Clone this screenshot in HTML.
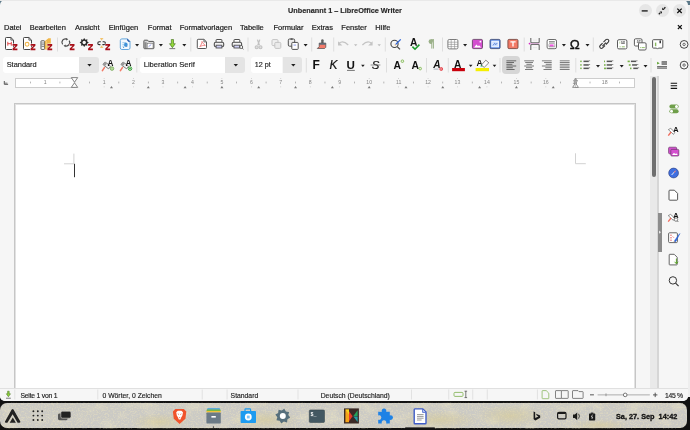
<!DOCTYPE html>
<html><head><meta charset="utf-8">
<style>
*{margin:0;padding:0;box-sizing:border-box}
html,body{width:690px;height:430px;overflow:hidden;background:#111;font-family:"Liberation Sans",sans-serif;color:#2e2e2e}
.a{position:absolute}
.t{position:absolute;white-space:nowrap;line-height:1;color:#1c1c1c;-webkit-text-stroke:0.15px #1c1c1c}
#corner-tl{left:0;top:0;width:12px;height:12px;background:#5b7888}
#corner-tr{left:678px;top:0;width:12px;height:12px;background:#5b7888}
#win{will-change:transform;left:0;top:0;width:688px;height:401px;background:#f6f6f6;border-radius:5px 5px 5px 5px;overflow:hidden}
#edge{left:688px;top:5px;width:2px;height:392px;background:#eeeeee}
.menu{font-size:7.5px;top:24px;color:#1c1c1c;-webkit-text-stroke:0.2px #1c1c1c}
.wbtn{width:13px;height:13px;border-radius:50%;background:#e6e6e6;top:4px}
.combo{background:#fff;border-radius:3px 0 0 3px}
.cbtn{background:#e4e4e4;border-radius:0 3px 3px 0}
.sep{width:1px;background:#e2e2e2}
.st{font-size:6.8px;top:393px;color:#1c1c1c;-webkit-text-stroke:0.15px #1c1c1c}
</style></head><body>
<div class="a" id="corner-tl"></div>
<div class="a" id="corner-tr"></div>
<div class="a" style="left:0;top:0;width:690px;height:1px;background:#e9e9e9;z-index:5"></div>
<div class="a" id="win">
  <!-- title -->
  <div class="t" style="left:288px;top:6.5px;font-size:7.3px;font-weight:bold;color:#2b2b2b">Unbenannt 1 – LibreOffice Writer</div>
  <div class="a wbtn" style="left:638.5px"></div>
  <div class="a wbtn" style="left:655.5px"></div>
  <div class="a wbtn" style="left:672.5px"></div>
  <!-- menu -->
  <div class="t menu" style="left:4px">Datei</div>
  <div class="t menu" style="left:29.7px">Bearbeiten</div>
  <div class="t menu" style="left:75px">Ansicht</div>
  <div class="t menu" style="left:108.7px">Einfügen</div>
  <div class="t menu" style="left:147.8px">Format</div>
  <div class="t menu" style="left:179.7px">Formatvorlagen</div>
  <div class="t menu" style="left:240px">Tabelle</div>
  <div class="t menu" style="left:273.5px">Formular</div>
  <div class="t menu" style="left:311.7px">Extras</div>
  <div class="t menu" style="left:341.3px">Fenster</div>
  <div class="t menu" style="left:375.3px">Hilfe</div>

  <!-- toolbar 2 combos -->
  <div class="a combo" style="left:2.5px;top:57px;width:76px;height:16px"></div>
  <div class="a cbtn" style="left:78.5px;top:57px;width:20px;height:16px"></div>
  <div class="t" style="left:6.7px;top:61px;font-size:7.4px">Standard</div>
  <div class="a combo" style="left:139.7px;top:57px;width:85.6px;height:16px"></div>
  <div class="a cbtn" style="left:225.3px;top:57px;width:19.7px;height:16px"></div>
  <div class="t" style="left:143.7px;top:61px;font-size:7.6px">Liberation Serif</div>
  <div class="a combo" style="left:250.8px;top:57px;width:31.7px;height:16px"></div>
  <div class="a cbtn" style="left:282.5px;top:57px;width:19.5px;height:16px"></div>
  <div class="t" style="left:254.7px;top:61px;font-size:7.2px">12 pt</div>
  <!-- align left pressed -->
  <div class="a" style="left:502px;top:56px;width:18px;height:18px;background:#d6d6d6;border-radius:4px"></div>

  <!-- ruler -->
  <div class="a" style="left:14.5px;top:78px;width:60px;height:10px;background:#fff;border:1px solid #cdcdcd"></div>
  <div class="a" style="left:575px;top:78px;width:60px;height:10px;background:#fff;border:1px solid #cdcdcd"></div>

  <!-- page -->
  <div class="a" style="left:14px;top:103px;width:622px;height:300px;background:#fff;border:1px solid #c6c6c6;box-shadow:inset 1px 1px 0 #e2e2e2, inset -1px 0 0 #e2e2e2"></div>

  <!-- scrollbar -->
  <div class="a" style="left:650px;top:76px;width:7px;height:312px;background:#e9e9e9"></div>
  <div class="a" style="left:652px;top:77px;width:3.8px;height:100px;background:#6e6e6e;border-radius:2px"></div>
  <div class="a" style="left:657px;top:76px;width:2px;height:312px;background:#d6d6d6"></div>
  <div class="a" style="left:658px;top:212.5px;width:3.7px;height:39.5px;background:#8c8c8c"></div>

  <!-- status bar -->
  <div class="a" style="left:0;top:388px;width:690px;height:13px;background:#f6f6f6;border-top:1px solid #e0e0e0"></div>
  <div class="t st" style="left:20.5px;letter-spacing:-0.22px">Seite 1 von 1</div>
  <div class="t st" style="left:102.5px">0 Wörter, 0 Zeichen</div>
  <div class="t st" style="left:230.6px">Standard</div>
  <div class="t st" style="left:320.7px">Deutsch (Deutschland)</div>
  <div class="t st" style="left:665px;letter-spacing:-0.3px">145 %</div>
</div>
<div class="a" id="edge"></div>

<!-- taskbar -->
<div class="a" style="left:0;top:402.8px;width:687px;height:25.6px;background:#cbcac5;border-radius:7px"></div>
<div class="t" style="z-index:10;will-change:transform;left:615.6px;top:413px;font-size:7.3px;font-weight:bold;color:#111;-webkit-text-stroke:0.3px #111">Sa, 27. Sep&nbsp; 14:42</div>

<svg class="a" style="left:0;top:0;will-change:transform" width="690" height="430" viewBox="0 0 690 430">
<rect x="641.7" y="10.2" width="6" height="1.4" fill="#222"/>
<path d="M658.8 14.2l1.6-1.6" stroke="#222" stroke-width="1.3"/><path d="M659.6 11.4h2.4v2.4z" fill="#222"/><path d="M665.4 7.2l-1.6 1.6" stroke="#222" stroke-width="1.3"/><path d="M664.6 10h-2.4v-2.4z" fill="#222"/>
<path d="M677.3 8.6l4.4 4.4M681.7 8.6l-4.4 4.4" stroke="#111" stroke-width="1.3"/>
<path d="M677.9 25.1l3.9 3.9M681.8 25.1l-3.9 3.9" stroke="#111" stroke-width="1.2"/>
<rect x="57.0" y="37.5" width="1" height="14.0" fill="#dedede"/>
<rect x="190.3" y="37.5" width="1" height="14.0" fill="#dedede"/>
<rect x="247.5" y="37.5" width="1" height="14.0" fill="#dedede"/>
<rect x="311.2" y="37.5" width="1" height="14.0" fill="#dedede"/>
<rect x="333.2" y="37.5" width="1" height="14.0" fill="#dedede"/>
<rect x="384.8" y="37.5" width="1" height="14.0" fill="#dedede"/>
<rect x="442.0" y="37.5" width="1" height="14.0" fill="#dedede"/>
<rect x="523.7" y="37.5" width="1" height="14.0" fill="#dedede"/>
<rect x="592.8" y="37.5" width="1" height="14.0" fill="#dedede"/>
<path d="M6.30 37.50H10.90L13.50 40.10V48.70Q13.50 49.50 12.70 49.50H6.30Q5.50 49.50 5.50 48.70V38.30Q5.50 37.50 6.30 37.50Z" fill="#fff" stroke="#444" stroke-width="1.0" stroke-linejoin="round"/>
<path d="M10.90 37.50V40.10H13.50" fill="none" stroke="#444" stroke-width="0.8"/>
<path d="M7.8 41.8v3.9M11.3 41.8v3.9M7.8 43.7h3.5" stroke="#e03a3a" stroke-width="0.9" fill="none"/>
<polygon points="12.60,44.00 17.40,44.00 17.40,45.70 14.50,48.50 17.40,48.50 17.40,50.20 12.60,50.20 12.60,48.50 15.50,45.70 12.60,45.70" fill="#a80f18" stroke="#f6f6f6" stroke-width="0.9" paint-order="stroke" stroke-linejoin="round"/>
<path d="M24.30 37.50H28.90L31.50 40.10V48.70Q31.50 49.50 30.70 49.50H24.30Q23.50 49.50 23.50 48.70V38.30Q23.50 37.50 24.30 37.50Z" fill="#fff" stroke="#444" stroke-width="1.0" stroke-linejoin="round"/>
<path d="M28.90 37.50V40.10H31.50" fill="none" stroke="#444" stroke-width="0.8"/>
<circle cx="27.1" cy="44.3" r="1.9" fill="none" stroke="#f0b54a" stroke-width="1.1"/>
<polygon points="30.60,44.00 35.40,44.00 35.40,45.70 32.50,48.50 35.40,48.50 35.40,50.20 30.60,50.20 30.60,48.50 33.50,45.70 30.60,45.70" fill="#a80f18" stroke="#f6f6f6" stroke-width="0.9" paint-order="stroke" stroke-linejoin="round"/>
<rect x="41" y="40.8" width="3.6" height="8.6" rx="0.6" fill="#fff" stroke="#4a4a4a" stroke-width="0.9"/>
<path d="M41.6 43h2.5M41.6 44.8h2.5M41.6 46.6h2.5" stroke="#4a4a4a" stroke-width="0.7"/>
<path d="M44.8 41.2L48.4 38.3H50.8V49.4H44.8Z" fill="#f1b648"/><path d="M46.4 41v8.2" stroke="#f8d890" stroke-width="0.7"/>
<polygon points="47.40,44.00 52.20,44.00 52.20,45.70 49.30,48.50 52.20,48.50 52.20,50.20 47.40,50.20 47.40,48.50 50.30,45.70 47.40,45.70" fill="#a80f18" stroke="#f6f6f6" stroke-width="0.9" paint-order="stroke" stroke-linejoin="round"/>
<path d="M62.6 44.4a3.5 3.5 0 0 1 4.1-5.3M69.2 40.6a3.5 3.5 0 0 1 -4.1 5.2" fill="none" stroke="#4a4a4a" stroke-width="1.2"/><path d="M66.2 37.9l2.1 1.4l-2.2 1.3z" fill="#4a4a4a"/><path d="M65.6 47.2l-2.1-1.4l2.2-1.3z" fill="#4a4a4a"/>
<polygon points="69.70,44.00 74.50,44.00 74.50,45.70 71.60,48.50 74.50,48.50 74.50,50.20 69.70,50.20 69.70,48.50 72.60,45.70 69.70,45.70" fill="#a80f18" stroke="#f6f6f6" stroke-width="0.9" paint-order="stroke" stroke-linejoin="round"/>
<path d="M88.80 42.50L87.06 43.69L87.45 45.75L85.39 45.36L84.20 47.10L83.01 45.36L80.95 45.75L81.34 43.69L79.60 42.50L81.34 41.31L80.95 39.25L83.01 39.64L84.20 37.90L85.39 39.64L87.45 39.25L87.06 41.31z" fill="#2a2a2a"/>
<circle cx="84.2" cy="42.5" r="1.7" fill="#f6f6f6"/>
<polygon points="88.10,44.00 92.90,44.00 92.90,45.70 90.00,48.50 92.90,48.50 92.90,50.20 88.10,50.20 88.10,48.50 91.00,45.70 88.10,45.70" fill="#a80f18" stroke="#f6f6f6" stroke-width="0.9" paint-order="stroke" stroke-linejoin="round"/>
<path d="M100.8 41.8h-1.6a1.4 1.4 0 0 0 0 2.8h1.2M102.6 41.8h1.4a1.4 1.4 0 0 1 0 2.8h-1.6" fill="none" stroke="#2e2e2e" stroke-width="1.1"/>
<path d="M100.2 38.7h3M101.7 38.7v1.6M100.2 47.3h3M101.7 45.7v1.6" stroke="#f0b54a" stroke-width="0.9"/>
<polygon points="105.30,44.00 110.10,44.00 110.10,45.70 107.20,48.50 110.10,48.50 110.10,50.20 105.30,50.20 105.30,48.50 108.20,45.70 105.30,45.70" fill="#a80f18" stroke="#f6f6f6" stroke-width="0.9" paint-order="stroke" stroke-linejoin="round"/>
<path d="M121.9 38.9H127.4L130 41.5V47.9Q130 49.5 128.4 49.5H121.9Q120.3 49.5 120.3 47.9V40.5Q120.3 38.9 121.9 38.9Z" fill="#f2f8fd" stroke="#64a6dc" stroke-width="1.0"/>
<path d="M127.2 38.6L130.3 41.7L128.6 41.9L127 40.3Z" fill="#2f5fae"/>
<path d="M122.4 42.6h1.8M122.4 44.4h1.6M122.4 46.2h2.2" stroke="#8cc2ea" stroke-width="0.8"/>
<path d="M124.6 42.3l2.6 .6l.6 2.4l-2.2 1.8l-1.6-1.6z" fill="#3f92d8"/>
<circle cx="123.6" cy="47.5" r="0.6" fill="#3f92d8"/><circle cx="126.8" cy="46.6" r="0.5" fill="#2f5fae"/>
<path d="M135.1 44.099999999999994h4.0l-2.0 2.4z" fill="#1e1e1e"/>
<path d="M144.6 40.2h3l1 1.2h4.6q.7 0 .7 .7v5.9q0 .7-.7 .7h-8.6q-.7 0-.7-.7v-7.1q0-.7.7-.7z" fill="#d8d8d8" stroke="#555" stroke-width="1.0"/>
<rect x="144.4" y="42.2" width="2.2" height="5.8" fill="#8a8a8a"/>
<rect x="147.2" y="43.4" width="5.8" height="4.8" fill="#fff" stroke="#666" stroke-width="0.5"/>
<path d="M148.6 46.6l2.6-2" stroke="#9aa4f0" stroke-width="1"/>
<path d="M158.9 44.099999999999994h4.0l-2.0 2.4z" fill="#1e1e1e"/>
<path d="M171.3 39.5h2.2v4.2h1.8l-2.9 4l-2.9-4h1.8z" fill="#93d83a" stroke="#3a6a18" stroke-width="0.6" stroke-linejoin="round"/>
<rect x="169.4" y="48.3" width="5.8" height="0.8" fill="#555"/>
<path d="M182.3 44.099999999999994h4.0l-2.0 2.4z" fill="#1e1e1e"/>
<path d="M198.10 39.30H203.90L206.50 41.90V47.70Q206.50 48.50 205.70 48.50H198.10Q197.30 48.50 197.30 47.70V40.10Q197.30 39.30 198.10 39.30Z" fill="#fff" stroke="#555" stroke-width="1.0" stroke-linejoin="round"/>
<path d="M203.90 39.30V41.90H206.50" fill="none" stroke="#555" stroke-width="0.8"/>
<path d="M199.8 46.6c1.2-1.6 2.3-3.4 2.2-5.2c1 2 2.2 3.3 3.3 4c-2-.1-4 .3-5.5 1.2z" fill="none" stroke="#ea5a5a" stroke-width="0.7"/>
<rect x="216.10000000000002" y="39.5" width="5.8" height="3" rx="0.6" fill="#fff" stroke="#505050" stroke-width="1.0"/>
<rect x="214.3" y="42.2" width="9.4" height="4.6" rx="1.5" fill="#f4f4f4" stroke="#505050" stroke-width="1.1"/>
<rect x="216.10000000000002" y="45.2" width="5.8" height="2.8" fill="#cfd0f6" stroke="#505050" stroke-width="0.9"/>
<rect x="234.0" y="39.5" width="5.8" height="3" rx="0.6" fill="#fff" stroke="#505050" stroke-width="1.0"/>
<rect x="232.2" y="42.2" width="9.4" height="4.6" rx="1.5" fill="#f4f4f4" stroke="#505050" stroke-width="1.1"/>
<rect x="234.0" y="45.2" width="5.8" height="2.8" fill="#cfd0f6" stroke="#505050" stroke-width="0.9"/>
<circle cx="241.2" cy="47" r="1.5" fill="#fff" stroke="#404040" stroke-width="0.8"/><path d="M242.2 48l1.2 1.2" stroke="#404040" stroke-width="0.9"/>
<path d="M257.4 39.6L259.4 45.2M259.8 39.6L257.8 45.2" stroke="#c2c2c2" stroke-width="1.3"/>
<circle cx="256.7" cy="47.3" r="1.5" fill="#dedede" stroke="#c2c2c2" stroke-width="1.1"/><circle cx="260.5" cy="47.3" r="1.5" fill="#dedede" stroke="#c2c2c2" stroke-width="1.1"/>
<rect x="272" y="39.6" width="6" height="6" rx="1" fill="#f0f0f0" stroke="#c4c4c4" stroke-width="1"/>
<rect x="274.8" y="42.4" width="6" height="6" rx="1" fill="#eaeaea" stroke="#c4c4c4" stroke-width="1"/>
<rect x="288.3" y="39" width="6.4" height="7.2" rx="1.2" fill="#eee" stroke="#505050" stroke-width="1"/>
<rect x="290.6" y="38.3" width="2" height="1.5" fill="#505050"/>
<rect x="291.8" y="42.4" width="6.4" height="7" rx="0.8" fill="#fff" stroke="#505050" stroke-width="1"/>
<path d="M293.5 44.3h2.6v1.6h-2.6z" fill="#b9c2f3"/>
<path d="M303.6 44.099999999999994h4.0l-2.0 2.4z" fill="#1e1e1e"/>
<path d="M321.2 43.2V40.2Q321.2 39.2 322.4 39.2Q323.6 39.2 323.6 40.2V43.2Z" fill="#606060"/>
<path d="M319.2 43.1H325.8V47.3L324.6 48.5H317.3L319.2 46.6Z" fill="#f47a6a" stroke="#4a4a4a" stroke-width="0.7" stroke-linejoin="round"/>
<rect x="319.2" y="43.1" width="6.6" height="1.6" fill="#556a78"/>
<path d="M339 43.2q4.2-3.6 9.2 1.8" fill="none" stroke="#c4c4c4" stroke-width="1.2"/><path d="M338 41.2v4.4h4.4z" fill="#c4c4c4"/>
<path d="M354.0 44.3h3.4l-1.7 2z" fill="#bdbdbd"/>
<path d="M371.6 43.2q-4.2-3.6 -9.2 1.8" fill="none" stroke="#c4c4c4" stroke-width="1.2"/><path d="M372.6 41.2v4.4h-4.4z" fill="#c4c4c4"/>
<path d="M377.5 44.3h3.4l-1.7 2z" fill="#bdbdbd"/>
<circle cx="394.5" cy="43.9" r="3.6" fill="none" stroke="#454545" stroke-width="1.1"/>
<path d="M397.2 46.6l2.8 2.8" stroke="#454545" stroke-width="1.3"/>
<path d="M400.7 39.4l-5.2 5.2" stroke="#2a62d8" stroke-width="1.3"/>
<path d="M395.6 44.6l-.8.8" stroke="#f2b160" stroke-width="1.2"/>
<text x="410" y="46.4" font-family="Liberation Sans" font-weight="bold" font-size="10.4" fill="#111">A</text>
<path d="M412.4 46.6l2.6 2.6l4.4-4.6" fill="none" stroke="#f6f6f6" stroke-width="2.6"/><path d="M412.4 46.6l2.6 2.6l4.4-4.6" fill="none" stroke="#1a9a2a" stroke-width="1.6"/>
<path d="M433.4 39.2v9.4M431.8 39.2v9.4" stroke="#9ab088" stroke-width="1.0"/>
<path d="M433.8 39.2h-3a2.2 2.4 0 0 0 0 4.8h1z" fill="#9ab088"/>
<rect x="447.9" y="39.5" width="10" height="9.4" rx="1.3" fill="#fff" stroke="#7a7a7a" stroke-width="1"/>
<path d="M447.9 42.2h10M447.9 44.4h10M447.9 46.6h10M451.2 39.5v9.4M454.6 39.5v9.4" stroke="#8a8a8a" stroke-width="0.6"/>
<path d="M463.1 44.099999999999994h4.0l-2.0 2.4z" fill="#1e1e1e"/>
<rect x="472.4" y="39.4" width="10.1" height="9.2" rx="1.2" fill="#d44fcf" stroke="#5a3a5a" stroke-width="0.8"/>
<path d="M474 47.4l2.4-3l1.6 1.8l1-1l2.3 2.2z" fill="#fff"/><circle cx="480.4" cy="41.7" r="0.9" fill="#fff"/>
<rect x="490" y="39.4" width="10.1" height="9.2" rx="1.2" fill="#5d8ae6" stroke="#34406a" stroke-width="0.8"/>
<rect x="491.8" y="41.2" width="6.6" height="5.6" fill="#cfe0ff" stroke="#fff" stroke-width="0.9"/>
<path d="M493 45.4l1.6-2l1.4 1.2l1.2-1.6" stroke="#2d5cc8" stroke-width="0.7" fill="none"/>
<rect x="507.9" y="39.4" width="10.1" height="9.2" rx="1.2" fill="#f27a66" stroke="#6a3a34" stroke-width="0.8"/>
<path d="M510.4 41.8h5.2M513 41.8v4.8" stroke="#fff" stroke-width="1.3"/>
<path d="M530.8 37.9V41.8Q530.8 42.8 531.8 42.8H538.2Q539.2 42.8 539.2 41.8V37.9M530.8 50V45.4Q530.8 44.4 531.8 44.4H538.2Q539.2 44.4 539.2 45.4V50" fill="none" stroke="#6a6a6a" stroke-width="1.1"/>
<path d="M533 40.2h4M533 47.6h4" stroke="#e4e4e4" stroke-width="0.8"/>
<path d="M529.6 43.6H539.6" stroke="#eea6e6" stroke-width="0.6"/><circle cx="529.5" cy="43.6" r="0.85" fill="#d42ac4"/>
<rect x="547.1" y="39.5" width="9.4" height="9.2" rx="1.6" fill="#fff" stroke="#6a6a6a" stroke-width="1"/>
<path d="M549 41.6h5.8M549 43.1h5.8" stroke="#6a6a6a" stroke-width="0.8"/>
<rect x="549.8" y="44.4" width="3.8" height="2.2" fill="#f05ae0"/>
<path d="M549 44.2v2.6h5.8v-2.6" stroke="#777" stroke-width="0.6" fill="none"/>
<path d="M561.9 44.099999999999994h4.0l-2.0 2.4z" fill="#1e1e1e"/>
<text x="569.8" y="48.7" font-family="Liberation Sans" font-size="13.4" fill="#111" stroke="#111" stroke-width="0.35">Ω</text>
<path d="M585.5 44.099999999999994h4.0l-2.0 2.4z" fill="#1e1e1e"/>
<path d="M603.5 42.1l2.4-2.4a1.6 1.6 0 0 1 2.4 2.4l-2.4 2.4M605 45.5l-2.4 2.4a1.6 1.6 0 0 1 -2.4-2.4l2.4-2.4M602.4 46.2l3.6-3.6" fill="none" stroke="#3a3a3a" stroke-width="1.1"/>
<rect x="617.5" y="39.7" width="9.4" height="9.2" rx="1.4" fill="#fff" stroke="#5a5a5a" stroke-width="1"/>
<path d="M621.2 41.8h1.2M623.2 41.8h1.6M621.2 43.2h3.6" stroke="#222" stroke-width="0.8"/>
<path d="M619.6 46.8h1M621.8 46.8h3" stroke="#7ab24a" stroke-width="0.8"/>
<path d="M619.8 41.6v2" stroke="#7ab24a" stroke-width="0.5"/>
<rect x="634.4" y="38.8" width="7.6" height="7.2" rx="1.2" fill="#fff" stroke="#5a5a5a" stroke-width="1"/>
<path d="M637 40.8h1M638.6 40.8h2M636.8 42.2h3" stroke="#222" stroke-width="0.7"/>
<rect x="638.5" y="42.8" width="7.6" height="7.2" rx="1.2" fill="#fff" stroke="#5a5a5a" stroke-width="1"/>
<path d="M640.2 47.6h1M641.8 47.6h3" stroke="#7ab24a" stroke-width="0.8"/>
<path d="M653.4 39.7h8.6q.8 0 .8 .8v6.8q0 .8-.8 .8h-3.6l-.9 1l-.9-1h-3.2q-.8 0-.8-.8v-6.8q0-.8.8-.8z" fill="#fff" stroke="#555" stroke-width="1"/>
<path d="M655.6 42.6v3.6" stroke="#8ab860" stroke-width="1.4"/><path d="M660.2 40.6v2.6" stroke="#222" stroke-width="1.4"/>
<circle cx="684.1" cy="44.4" r="3.9" fill="none" stroke="#333" stroke-width="0.9"/><circle cx="684.1" cy="44.4" r="1.2" fill="none" stroke="#333" stroke-width="0.7"/>
<rect x="136.3" y="58" width="1" height="14.5" fill="#dedede"/>
<rect x="305.8" y="58" width="1" height="14.5" fill="#dedede"/>
<rect x="386.0" y="58" width="1" height="14.5" fill="#dedede"/>
<rect x="426.0" y="58" width="1" height="14.5" fill="#dedede"/>
<rect x="447.8" y="58" width="1" height="14.5" fill="#dedede"/>
<rect x="499.5" y="58" width="1" height="14.5" fill="#dedede"/>
<rect x="575.3" y="58" width="1" height="14.5" fill="#dedede"/>
<rect x="650.5" y="58" width="1" height="14.5" fill="#dedede"/>
<path d="M87.3 63.900000000000006h4.4l-2.2 2.6z" fill="#1e1e1e"/>
<path d="M233.60000000000002 63.900000000000006h4.4l-2.2 2.6z" fill="#1e1e1e"/>
<path d="M291.1 63.900000000000006h4.4l-2.2 2.6z" fill="#1e1e1e"/>
<path d="M104.39999999999999 67.6L102.39999999999999 70.6" stroke="#f27a66" stroke-width="1.6" stroke-linecap="round"/>
<rect x="-3.6" y="-1.7" width="7.2" height="3.4" rx="0.9" transform="translate(106.8 65.4) rotate(36)" fill="#f4f4f4" stroke="#6a6a6a" stroke-width="0.8"/>
<rect x="-3.6" y="-1.7" width="2.6" height="3.4" rx="0.9" transform="translate(106.8 65.4) rotate(36)" fill="#9a9a9a"/>
<text x="107.5" y="65.9" font-family="Liberation Sans" font-weight="bold" font-size="8.2" fill="#111">A</text>
<circle cx="112.0" cy="68.6" r="1.8" fill="#b4d89a" stroke="#6aa04a" stroke-width="0.7"/>
<path d="M122.39999999999999 67.6L120.39999999999999 70.6" stroke="#f27a66" stroke-width="1.6" stroke-linecap="round"/>
<rect x="-3.6" y="-1.7" width="7.2" height="3.4" rx="0.9" transform="translate(124.8 65.4) rotate(36)" fill="#f4f4f4" stroke="#6a6a6a" stroke-width="0.8"/>
<rect x="-3.6" y="-1.7" width="2.6" height="3.4" rx="0.9" transform="translate(124.8 65.4) rotate(36)" fill="#9a9a9a"/>
<text x="125.5" y="65.9" font-family="Liberation Sans" font-weight="bold" font-size="8.2" fill="#111">A</text>
<circle cx="130.0" cy="68.6" r="1.8" fill="#fff" stroke="#2a9a2a" stroke-width="0.9"/><path d="M129.0 68.6h2M130.0 67.6v2" stroke="#2a9a2a" stroke-width="0.7"/>
<text x="312.6" y="69" font-family="Liberation Sans" font-weight="bold" font-size="12" fill="#111">F</text>
<text x="329.6" y="69" font-family="Liberation Sans" font-style="italic" font-size="12" fill="#111" stroke="#111" stroke-width="0.2">K</text>
<text x="346.5" y="68.8" font-family="Liberation Sans" font-weight="bold" font-size="11.6" fill="#111">U</text>
<rect x="347" y="69.9" width="7.8" height="0.9" fill="#666"/>
<path d="M361.09999999999997 64.7h3.6l-1.8 2.2z" fill="#1e1e1e"/>
<text x="371.8" y="68.9" font-family="Liberation Sans" font-style="italic" font-size="11.4" fill="#111" stroke="#111" stroke-width="0.15">S</text>
<rect x="370.6" y="64.6" width="9.8" height="0.8" fill="#777"/>
<text x="393.6" y="68.7" font-family="Liberation Sans" font-weight="bold" font-size="10.4" fill="#111">A</text>
<circle cx="402.4" cy="61.2" r="1.3" fill="#e6f2dc" stroke="#7ab24a" stroke-width="0.8"/>
<text x="411.6" y="68.7" font-family="Liberation Sans" font-weight="bold" font-size="10.4" fill="#111">A</text>
<circle cx="420.2" cy="68.6" r="1.3" fill="#e6f2dc" stroke="#7ab24a" stroke-width="0.8"/>
<text x="433.2" y="67.8" font-family="Liberation Sans" font-weight="bold" font-style="italic" font-size="10.2" fill="#111">A</text>
<path d="M433.6 69.1h5" stroke="#8a9aa8" stroke-width="0.7"/>
<circle cx="441.2" cy="69" r="1.8" fill="#e01b24"/><path d="M440.4 68.2l1.6 1.6M442 68.2l-1.6 1.6" stroke="#fff" stroke-width="0.6"/>
<text x="454" y="67.9" font-family="Liberation Sans" font-weight="bold" font-size="10.2" fill="#111">A</text>
<rect x="452.1" y="68" width="12.8" height="3.2" fill="#c9000b"/>
<path d="M468.9 64.7h3.6l-1.8 2.2z" fill="#1e1e1e"/>
<text x="476.6" y="66.2" font-family="Liberation Sans" font-weight="bold" font-size="8.6" fill="#111">A</text>
<path d="M481.4 65l4.4-4.8l3 2.6l-4.6 4.6z" fill="#fff" stroke="#555" stroke-width="0.7"/>
<path d="M481.2 64.6l-.8 2l2.2-.2z" fill="#26a269"/>
<rect x="475.6" y="68" width="13.4" height="3.2" fill="#f5ef00"/>
<path d="M492.7 64.7h3.6l-1.8 2.2z" fill="#1e1e1e"/>
<rect x="506.4" y="60.40" width="9.8" height="0.9" fill="#5c5c5c"/>
<rect x="506.4" y="62.12" width="7.6" height="0.9" fill="#5c5c5c"/>
<rect x="506.4" y="63.84" width="6" height="0.9" fill="#5c5c5c"/>
<rect x="506.4" y="65.56" width="9.8" height="0.9" fill="#5c5c5c"/>
<rect x="506.4" y="67.28" width="6.4" height="0.9" fill="#5c5c5c"/>
<rect x="506.4" y="69.00" width="8.2" height="0.9" fill="#5c5c5c"/>
<rect x="524.2" y="60.40" width="9.8" height="0.9" fill="#6e6e6e"/>
<rect x="525.2" y="62.12" width="7.800000000000001" height="0.9" fill="#6e6e6e"/>
<rect x="526.4000000000001" y="63.84" width="5.3999999999999995" height="0.9" fill="#6e6e6e"/>
<rect x="524.2" y="65.56" width="9.8" height="0.9" fill="#6e6e6e"/>
<rect x="526.0" y="67.28" width="6.2" height="0.9" fill="#6e6e6e"/>
<rect x="525.0" y="69.00" width="8.2" height="0.9" fill="#6e6e6e"/>
<rect x="541.9" y="60.40" width="9.8" height="0.9" fill="#6e6e6e"/>
<rect x="544.1" y="62.12" width="7.6000000000000005" height="0.9" fill="#6e6e6e"/>
<rect x="545.6999999999999" y="63.84" width="6.000000000000001" height="0.9" fill="#6e6e6e"/>
<rect x="541.9" y="65.56" width="9.8" height="0.9" fill="#6e6e6e"/>
<rect x="545.3" y="67.28" width="6.4" height="0.9" fill="#6e6e6e"/>
<rect x="543.5" y="69.00" width="8.200000000000001" height="0.9" fill="#6e6e6e"/>
<rect x="559.8" y="60.40" width="9.8" height="0.9" fill="#6e6e6e"/>
<rect x="559.8" y="62.12" width="9.8" height="0.9" fill="#6e6e6e"/>
<rect x="559.8" y="63.84" width="9.8" height="0.9" fill="#6e6e6e"/>
<rect x="559.8" y="65.56" width="9.8" height="0.9" fill="#6e6e6e"/>
<rect x="559.8" y="67.28" width="9.8" height="0.9" fill="#6e6e6e"/>
<rect x="559.8" y="69.00" width="9.8" height="0.9" fill="#6e6e6e"/>
<rect x="580.2" y="60.6" width="1.5" height="1.5" fill="#7ab24a"/>
<rect x="583.5" y="60.6" width="5.3" height="1.5" fill="#555"/>
<rect x="588.8000000000001" y="60.4" width="1.3" height="0.8" fill="#777"/>
<rect x="580.2" y="64.2" width="1.5" height="1.5" fill="#7ab24a"/>
<rect x="583.5" y="64.2" width="5.3" height="1.5" fill="#555"/>
<rect x="588.8000000000001" y="64.0" width="1.3" height="0.8" fill="#777"/>
<rect x="580.2" y="67.6" width="1.5" height="1.5" fill="#7ab24a"/>
<rect x="583.5" y="67.6" width="5.3" height="1.5" fill="#555"/>
<rect x="588.8000000000001" y="67.39999999999999" width="1.3" height="0.8" fill="#777"/>
<path d="M596.0 65.0h4.0l-2.0 2.4z" fill="#1e1e1e"/>
<rect x="604.0" y="60.6" width="1.0" height="1.6" fill="#7ab24a"/>
<rect x="606.6999999999999" y="60.6" width="5.3" height="1.5" fill="#555"/>
<rect x="612.0" y="60.4" width="1.3" height="0.8" fill="#777"/>
<rect x="604.0" y="64.2" width="1.6" height="1.6" fill="#7ab24a"/>
<rect x="606.6999999999999" y="64.2" width="5.3" height="1.5" fill="#555"/>
<rect x="612.0" y="64.0" width="1.3" height="0.8" fill="#777"/>
<rect x="604.0" y="67.6" width="2.2" height="1.6" fill="#7ab24a"/>
<rect x="606.6999999999999" y="67.6" width="5.3" height="1.5" fill="#555"/>
<rect x="612.0" y="67.39999999999999" width="1.3" height="0.8" fill="#777"/>
<path d="M619.7 65.0h4.0l-2.0 2.4z" fill="#1e1e1e"/>
<rect x="627.6" y="60.6" width="2.2" height="1.6" fill="#7ab24a"/>
<rect x="630.9" y="60.6" width="5.3" height="1.5" fill="#555"/>
<rect x="636.2" y="60.4" width="1.3" height="0.8" fill="#777"/>
<rect x="628.8000000000001" y="64.2" width="1.8400000000000003" height="1.6" fill="#7ab24a"/>
<rect x="632.1" y="64.2" width="4.9399999999999995" height="1.5" fill="#555"/>
<rect x="637.0400000000001" y="64.0" width="1.3" height="0.8" fill="#777"/>
<rect x="630.0" y="67.6" width="1.4800000000000002" height="1.6" fill="#7ab24a"/>
<rect x="633.3" y="67.6" width="4.58" height="1.5" fill="#555"/>
<rect x="637.88" y="67.39999999999999" width="1.3" height="0.8" fill="#777"/>
<path d="M643.5 65.0h4.0l-2.0 2.4z" fill="#1e1e1e"/>
<path d="M657.1 61.8l2.6 1.4l-2.6 1.4z" fill="#5aa02a"/>
<rect x="661.6" y="61.2" width="5.4" height="3.6" fill="#666"/><path d="M661.6 63h5.4" stroke="#f6f6f6" stroke-width="0.5"/>
<rect x="657.1" y="66" width="9.9" height="2.7" fill="#666"/><path d="M657.1 67.35h9.9" stroke="#f6f6f6" stroke-width="0.5"/>
<circle cx="684.1" cy="65.1" r="3.9" fill="none" stroke="#333" stroke-width="0.9"/><circle cx="684.1" cy="65.1" r="1.2" fill="none" stroke="#333" stroke-width="0.7"/>
<path d="M4.3 81v3.3h3.8" stroke="#555" stroke-width="1" fill="none"/><rect x="5" y="82.6" width="2.4" height="1.2" fill="#888"/>
<text x="45.20" y="84.4" font-family="Liberation Sans" font-size="5.2" fill="#858585" text-anchor="middle">1</text>
<text x="104.10" y="84.4" font-family="Liberation Sans" font-size="5.2" fill="#858585" text-anchor="middle">1</text>
<text x="133.55" y="84.4" font-family="Liberation Sans" font-size="5.2" fill="#858585" text-anchor="middle">2</text>
<text x="163.00" y="84.4" font-family="Liberation Sans" font-size="5.2" fill="#858585" text-anchor="middle">3</text>
<text x="192.45" y="84.4" font-family="Liberation Sans" font-size="5.2" fill="#858585" text-anchor="middle">4</text>
<text x="221.90" y="84.4" font-family="Liberation Sans" font-size="5.2" fill="#858585" text-anchor="middle">5</text>
<text x="251.35" y="84.4" font-family="Liberation Sans" font-size="5.2" fill="#858585" text-anchor="middle">6</text>
<text x="280.80" y="84.4" font-family="Liberation Sans" font-size="5.2" fill="#858585" text-anchor="middle">7</text>
<text x="310.25" y="84.4" font-family="Liberation Sans" font-size="5.2" fill="#858585" text-anchor="middle">8</text>
<text x="339.70" y="84.4" font-family="Liberation Sans" font-size="5.2" fill="#858585" text-anchor="middle">9</text>
<text x="369.15" y="84.4" font-family="Liberation Sans" font-size="5.2" fill="#858585" text-anchor="middle">10</text>
<text x="398.60" y="84.4" font-family="Liberation Sans" font-size="5.2" fill="#858585" text-anchor="middle">11</text>
<text x="428.05" y="84.4" font-family="Liberation Sans" font-size="5.2" fill="#858585" text-anchor="middle">12</text>
<text x="457.50" y="84.4" font-family="Liberation Sans" font-size="5.2" fill="#858585" text-anchor="middle">13</text>
<text x="486.95" y="84.4" font-family="Liberation Sans" font-size="5.2" fill="#858585" text-anchor="middle">14</text>
<text x="516.40" y="84.4" font-family="Liberation Sans" font-size="5.2" fill="#858585" text-anchor="middle">15</text>
<text x="545.85" y="84.4" font-family="Liberation Sans" font-size="5.2" fill="#858585" text-anchor="middle">16</text>
<text x="575.30" y="84.4" font-family="Liberation Sans" font-size="5.2" fill="#858585" text-anchor="middle">17</text>
<text x="604.75" y="84.4" font-family="Liberation Sans" font-size="5.2" fill="#858585" text-anchor="middle">18</text>
<rect x="30.13" y="81.6" width="0.7" height="1.8" fill="#999"/>
<rect x="59.58" y="81.6" width="0.7" height="1.8" fill="#999"/>
<rect x="89.03" y="81.6" width="0.7" height="1.8" fill="#999"/>
<rect x="118.48" y="81.6" width="0.7" height="1.8" fill="#999"/>
<rect x="147.93" y="81.6" width="0.7" height="1.8" fill="#999"/>
<rect x="177.38" y="81.6" width="0.7" height="1.8" fill="#999"/>
<rect x="206.83" y="81.6" width="0.7" height="1.8" fill="#999"/>
<rect x="236.28" y="81.6" width="0.7" height="1.8" fill="#999"/>
<rect x="265.72" y="81.6" width="0.7" height="1.8" fill="#999"/>
<rect x="295.17" y="81.6" width="0.7" height="1.8" fill="#999"/>
<rect x="324.62" y="81.6" width="0.7" height="1.8" fill="#999"/>
<rect x="354.07" y="81.6" width="0.7" height="1.8" fill="#999"/>
<rect x="383.52" y="81.6" width="0.7" height="1.8" fill="#999"/>
<rect x="412.98" y="81.6" width="0.7" height="1.8" fill="#999"/>
<rect x="442.42" y="81.6" width="0.7" height="1.8" fill="#999"/>
<rect x="471.88" y="81.6" width="0.7" height="1.8" fill="#999"/>
<rect x="501.32" y="81.6" width="0.7" height="1.8" fill="#999"/>
<rect x="530.77" y="81.6" width="0.7" height="1.8" fill="#999"/>
<rect x="560.23" y="81.6" width="0.7" height="1.8" fill="#999"/>
<rect x="589.67" y="81.6" width="0.7" height="1.8" fill="#999"/>
<rect x="619.12" y="81.6" width="0.7" height="1.8" fill="#999"/>
<rect x="103.80" y="86.6" width="0.6" height="0.6" fill="#999"/><rect x="103.80" y="78.2" width="0.6" height="0.6" fill="#999"/>
<rect x="133.25" y="86.6" width="0.6" height="0.6" fill="#999"/><rect x="133.25" y="78.2" width="0.6" height="0.6" fill="#999"/>
<rect x="162.70" y="86.6" width="0.6" height="0.6" fill="#999"/><rect x="162.70" y="78.2" width="0.6" height="0.6" fill="#999"/>
<rect x="192.15" y="86.6" width="0.6" height="0.6" fill="#999"/><rect x="192.15" y="78.2" width="0.6" height="0.6" fill="#999"/>
<rect x="221.60" y="86.6" width="0.6" height="0.6" fill="#999"/><rect x="221.60" y="78.2" width="0.6" height="0.6" fill="#999"/>
<rect x="251.05" y="86.6" width="0.6" height="0.6" fill="#999"/><rect x="251.05" y="78.2" width="0.6" height="0.6" fill="#999"/>
<rect x="280.50" y="86.6" width="0.6" height="0.6" fill="#999"/><rect x="280.50" y="78.2" width="0.6" height="0.6" fill="#999"/>
<rect x="309.95" y="86.6" width="0.6" height="0.6" fill="#999"/><rect x="309.95" y="78.2" width="0.6" height="0.6" fill="#999"/>
<rect x="339.40" y="86.6" width="0.6" height="0.6" fill="#999"/><rect x="339.40" y="78.2" width="0.6" height="0.6" fill="#999"/>
<rect x="368.85" y="86.6" width="0.6" height="0.6" fill="#999"/><rect x="368.85" y="78.2" width="0.6" height="0.6" fill="#999"/>
<rect x="398.30" y="86.6" width="0.6" height="0.6" fill="#999"/><rect x="398.30" y="78.2" width="0.6" height="0.6" fill="#999"/>
<rect x="427.75" y="86.6" width="0.6" height="0.6" fill="#999"/><rect x="427.75" y="78.2" width="0.6" height="0.6" fill="#999"/>
<rect x="457.20" y="86.6" width="0.6" height="0.6" fill="#999"/><rect x="457.20" y="78.2" width="0.6" height="0.6" fill="#999"/>
<rect x="486.65" y="86.6" width="0.6" height="0.6" fill="#999"/><rect x="486.65" y="78.2" width="0.6" height="0.6" fill="#999"/>
<rect x="516.10" y="86.6" width="0.6" height="0.6" fill="#999"/><rect x="516.10" y="78.2" width="0.6" height="0.6" fill="#999"/>
<rect x="545.55" y="86.6" width="0.6" height="0.6" fill="#999"/><rect x="545.55" y="78.2" width="0.6" height="0.6" fill="#999"/>
<path d="M109.96 88.2h3l-1.5-2.2z" fill="#777"/>
<path d="M146.78 88.2h3l-1.5-2.2z" fill="#777"/>
<path d="M183.59 88.2h3l-1.5-2.2z" fill="#777"/>
<path d="M220.40 88.2h3l-1.5-2.2z" fill="#777"/>
<path d="M257.21 88.2h3l-1.5-2.2z" fill="#777"/>
<path d="M294.02 88.2h3l-1.5-2.2z" fill="#777"/>
<path d="M330.84 88.2h3l-1.5-2.2z" fill="#777"/>
<path d="M367.65 88.2h3l-1.5-2.2z" fill="#777"/>
<path d="M404.46 88.2h3l-1.5-2.2z" fill="#777"/>
<path d="M441.27 88.2h3l-1.5-2.2z" fill="#777"/>
<path d="M478.09 88.2h3l-1.5-2.2z" fill="#777"/>
<path d="M514.90 88.2h3l-1.5-2.2z" fill="#777"/>
<path d="M551.71 88.2h3l-1.5-2.2z" fill="#777"/>
<path d="M71.3 77.6h6.4l-3.2 4.6zM71.3 87.4h6.4l-3.2-4.6z" fill="#fff" stroke="#666" stroke-width="0.8"/>
<path d="M572.6 87.4h5.8l-2.2-3.4v-5.2h-1.4v5.2z" fill="none" stroke="#777" stroke-width="0.8" stroke-linejoin="round"/>
<path d="M64 163.8h10.2M73.9 153.6v10.2" stroke="#d2d2d2" stroke-width="1"/>
<rect x="74" y="163.8" width="1" height="13.4" fill="#333"/>
<path d="M575.5 153.3v10.4h10.3" stroke="#d2d2d2" stroke-width="1" fill="none"/>
<path d="M670.7 83.2h6.4M670.7 85.7h6.4M670.7 88.4h6.4" stroke="#111" stroke-width="1.1"/>
<rect x="669.4" y="104.4" width="9.2" height="4" rx="2" fill="#6f9f4a"/><circle cx="676.5" cy="106.4" r="1.5" fill="#fff"/>
<rect x="669.4" y="109.2" width="9.2" height="4" rx="2" fill="#6f9f4a"/><circle cx="671.5" cy="111.2" r="1.5" fill="#fff"/>
<path d="M668.3 129.6l2.4-1.2l4.2 3.8l-1.4 2.2z" fill="#fff" stroke="#777" stroke-width="0.8"/>
<path d="M671.1 132.0l-2.8 3.6" stroke="#f06a5a" stroke-width="1.3"/>
<text x="673.3" y="132.0" font-family="Liberation Sans" font-weight="bold" font-size="7.4" fill="#111">A</text>
<rect x="668.6" y="147.2" width="8" height="6.6" rx="1" fill="#d44fcf" stroke="#6a3a6a" stroke-width="0.7"/>
<rect x="670.8" y="149.4" width="8" height="6.6" rx="1" fill="#d44fcf" stroke="#6a3a6a" stroke-width="0.7"/>
<path d="M672 155l2-2.2l1.2 1.2l1-0.8l1.6 1.8z" fill="#fff"/>
<circle cx="673.6" cy="173" r="4.9" fill="#3f6fe0" stroke="#2a3a7a" stroke-width="0.6"/><path d="M671.6 175l3.2-3.6l0.6-0.4z" fill="#fff" stroke="#fff" stroke-width="0.5"/><path d="M675.6 171l-1.6 1.4" stroke="#e04040" stroke-width="0.9"/>
<path d="M669.8 190.2h4.6l3.2 3.2v6q0 .8-.8 .8h-7q-.8 0-.8-.8v-8.4q0-.8.8-.8z" fill="#fff" stroke="#444" stroke-width="0.9"/>
<path d="M668.1999999999999 215.6l2.4-1.2l4.2 3.8l-1.4 2.2z" fill="#fff" stroke="#777" stroke-width="0.8"/>
<path d="M671.0 218.0l-2.8 3.6" stroke="#f06a5a" stroke-width="1.3"/>
<text x="673.1999999999999" y="218.0" font-family="Liberation Sans" font-weight="bold" font-size="7.4" fill="#111">A</text>
<circle cx="676.0" cy="219.6" r="1.7" fill="#fff" stroke="#555" stroke-width="0.7"/><path d="M677.1999999999999 220.79999999999998l1.2 1.2" stroke="#555" stroke-width="0.8"/>
<rect x="668.6" y="232.8" width="8.8" height="9.8" rx="1" fill="#fff" stroke="#555" stroke-width="0.9"/>
<path d="M670.2 235.2h1.6M670.2 237.8h1.6M670.2 240.2h1.6" stroke="#e04040" stroke-width="0.8"/><path d="M672.6 236.4l1.4 1.4" stroke="#e04040" stroke-width="0.6"/>
<path d="M679.8 233.6l-5 6.6l-.6 2l1.8-1z" fill="#2a62d8" stroke="#2a62d8" stroke-width="0.6"/><path d="M674.3 241.2l-.4 .9" stroke="#f2b160" stroke-width="0.9"/>
<path d="M669.8 254.3h4.4l3 3v7q0 .6-.6 .6h-6.8q-.6 0-.6-.6v-9.4q0-.6.6-.6z" fill="#fff" stroke="#555" stroke-width="0.9"/>
<path d="M676.4 258.6v5M674.6 261.8l1.8 2l1.8-2" stroke="#5aa02a" stroke-width="1" fill="none"/>
<circle cx="672.9" cy="280.4" r="3.7" fill="none" stroke="#333" stroke-width="1"/><path d="M675.6 283.1l3 3" stroke="#333" stroke-width="1.1"/>
<path d="M659.2 230.6l1.6 1.6l-1.6 1.6z" fill="#fff"/>
<rect x="14.3" y="389.5" width="1" height="10" fill="#e2e2e2"/>
<rect x="97.3" y="389.5" width="1" height="10" fill="#e2e2e2"/>
<rect x="201.7" y="389.5" width="1" height="10" fill="#e2e2e2"/>
<rect x="226.6" y="389.5" width="1" height="10" fill="#e2e2e2"/>
<rect x="297.5" y="389.5" width="1" height="10" fill="#e2e2e2"/>
<rect x="411.0" y="389.5" width="1" height="10" fill="#e2e2e2"/>
<rect x="448.2" y="389.5" width="1" height="10" fill="#e2e2e2"/>
<rect x="472.2" y="389.5" width="1" height="10" fill="#e2e2e2"/>
<rect x="486.8" y="389.5" width="1" height="10" fill="#e2e2e2"/>
<rect x="536.9" y="389.5" width="1" height="10" fill="#e2e2e2"/>
<path d="M7.6 391.2h1.6v2.6h1.3l-2.1 3l-2.1-3h1.3z" fill="#8fd13c" stroke="#3e6a18" stroke-width="0.5"/><rect x="6" y="397.8" width="4.8" height="0.7" fill="#444"/>
<rect x="454" y="392.4" width="9" height="4" rx="1" fill="none" stroke="#8ab860" stroke-width="0.9"/><path d="M464.5 391.2h2.6M465.8 391.2v6.4M464.5 397.6h2.6" stroke="#555" stroke-width="0.8"/>
<path d="M542.6 390.6h3.6l2.6 2.6v5q0 .5-.5 .5h-5.7q-.5 0-.5-.5v-7.1q0-.5.5-.5z" fill="none" stroke="#8ab860" stroke-width="0.8"/>
<path d="M556 390.6h5.4v7.8h-5.4q-.5 0-.5-.5v-6.8q0-.5.5-.5zM561.5 390.6h6.2q.5 0 .5 .5v6.8q0 .5-.5 .5h-6.2" fill="none" stroke="#666" stroke-width="0.8"/>
<path d="M573 390.6h5l1 1h3.6q.5 0 .5 .5v5.8q0 .5-.5 .5h-9.6q-.5 0-.5-.5v-6.8q0-.5.5-.5z" fill="none" stroke="#666" stroke-width="0.8"/>
<rect x="590" y="394.4" width="3.9" height="0.9" fill="#444"/>
<rect x="597.6" y="394.5" width="52.2" height="0.8" fill="#999"/><rect x="605.6" y="393.4" width="0.8" height="2.8" fill="#888"/>
<circle cx="625.2" cy="394.9" r="1.8" fill="#fff" stroke="#555" stroke-width="0.8"/>
<path d="M653 394.9h4.4M655.2 392.7v4.4" stroke="#444" stroke-width="0.9"/>
<defs><filter id="nz" x="0" y="0" width="100%" height="100%"><feTurbulence type="fractalNoise" baseFrequency="0.6 0.7" numOctaves="2" seed="7"/><feColorMatrix type="matrix" values="0 0 0 0 0.88  0 0 0 0 0.80  0 0 0 0 0.52  0 0 0 5 -2.4"/></filter><filter id="nz2" x="0" y="0" width="100%" height="100%"><feTurbulence type="fractalNoise" baseFrequency="0.05 0.08" numOctaves="2" seed="3"/><feColorMatrix type="matrix" values="0 0 0 0 0.86  0 0 0 0 0.80  0 0 0 0 0.58  0 0 0 4 -2.0"/></filter><clipPath id="pc"><rect x="0" y="402.8" width="687" height="25.6" rx="7"/></clipPath></defs>
<defs><radialGradient id="yg"><stop offset="0" stop-color="#d9cc92" stop-opacity="0.55"/><stop offset="1" stop-color="#d9cc92" stop-opacity="0"/></radialGradient></defs>
<g clip-path="url(#pc)"><rect x="0" y="402.8" width="687" height="25.6" filter="url(#nz2)" opacity="0.3"/><rect x="0" y="402.8" width="687" height="25.6" filter="url(#nz)" opacity="0.35"/><ellipse cx="160" cy="422" rx="30" ry="9" fill="url(#yg)"/><ellipse cx="265" cy="420" rx="35" ry="10" fill="url(#yg)"/><ellipse cx="440" cy="420" rx="40" ry="10" fill="url(#yg)"/><ellipse cx="510" cy="416" rx="35" ry="12" fill="url(#yg)"/><ellipse cx="600" cy="425" rx="30" ry="6" fill="url(#yg)"/></g>
<path d="M5 421.4L11.7 409.6Q12.6 408.3 13.5 409.6L20.3 421.4Q20.8 422.8 19.2 422.8H17.6L12.6 414.2L7.4 422.8H6.2Q4.5 422.8 5 421.4Z" fill="#232323"/>
<path d="M9.7 422.8L12.8 417.4L15.9 422.8Z" fill="#232323"/>
<circle cx="33.4" cy="411.2" r="0.95" fill="#222"/>
<circle cx="33.4" cy="415.59999999999997" r="0.95" fill="#222"/>
<circle cx="33.4" cy="420.0" r="0.95" fill="#222"/>
<circle cx="37.8" cy="411.2" r="0.95" fill="#222"/>
<circle cx="37.8" cy="415.59999999999997" r="0.95" fill="#222"/>
<circle cx="37.8" cy="420.0" r="0.95" fill="#222"/>
<circle cx="42.2" cy="411.2" r="0.95" fill="#222"/>
<circle cx="42.2" cy="415.59999999999997" r="0.95" fill="#222"/>
<circle cx="42.2" cy="420.0" r="0.95" fill="#222"/>
<rect x="58" y="413.4" width="9.6" height="6.8" rx="1.4" fill="#555"/><rect x="60.8" y="411.2" width="10.2" height="7" rx="1.6" fill="#222" stroke="#c8c6c0" stroke-width="0.7"/>
<path d="M175.4 408.9L183.8 408.9L186.3 411.4L185.4 418.8L179.6 424.1L173.8 418.8L172.9 411.4Z" fill="#f0532b"/>
<path d="M176.2 412.2L177.8 410.8H181.4L183 412.2L182.4 415.4L181.2 417.4L180.4 419.4H178.8L178 417.4L176.8 415.4Z" fill="#fff"/>
<path d="M177.8 413.8l1.2.8M181.4 413.8l-1.2.8M179 417.6h1.2" stroke="#f0532b" stroke-width="0.7"/>
<path d="M207.6 408.2h12l.8 1.6h-13.6z" fill="#3a9ee0"/><path d="M207 409.6h13.2l.6 1.4h-14.4z" fill="#69b84a"/><rect x="206.4" y="410.9" width="14.4" height="1.6" fill="#f2c23a"/>
<rect x="206.4" y="412.4" width="14.4" height="11.2" rx="0.8" fill="#6b7a86"/><rect x="211.4" y="416" width="4.4" height="1.6" fill="#fff"/>
<rect x="212.9" y="426.4" width="0.9" height="1.4" fill="#222"/>
<path d="M245 411.2v-1.6q0-.8 .8-.8h4q.8 0 .8 .8v1.6" fill="none" stroke="#1d9bf0" stroke-width="1.2"/>
<rect x="240.6" y="411" width="15.4" height="12" rx="0.8" fill="#1d9bf0"/><circle cx="248.3" cy="417" r="3.4" fill="#fff"/><rect x="246.9" y="415.6" width="2.8" height="2.8" fill="#7cc4f8"/>
<path d="M290.25 417.58L287.46 419.21L287.02 422.42L283.89 421.59L281.32 423.55L279.69 420.76L276.48 420.32L277.31 417.19L275.35 414.62L278.14 412.99L278.58 409.78L281.71 410.61L284.28 408.65L285.91 411.44L289.12 411.88L288.29 415.01z" fill="#566f7c"/><circle cx="282.8" cy="416.1" r="3" fill="#fff"/>
<rect x="309.3" y="409.9" width="15.2" height="12.6" rx="1" fill="#435862" stroke="#2f3e45" stroke-width="0.5"/><text x="310.6" y="415.6" font-family="Liberation Mono" font-size="5" font-weight="bold" fill="#fff">$_</text>
<rect x="344" y="408.4" width="14.9" height="15.1" fill="#3b2a25"/><path d="M345.4 409.6h3.6v12.6h-3.6z" fill="#f5a31a"/><path d="M345.4 409.6h3.6v5z" fill="#f7d21e"/><path d="M349 411.2l3.6 5l-3.6 5z" fill="#e43a2a"/><path d="M357.6 410.2l-4.2 5.8l4.2 0z" fill="#23a35a"/><path d="M357.6 416.4l-4.2 0l4.2 5.6z" fill="#22a0a8"/>
<path d="M378.2 411.8h3.6q-.6-3 2.2-3.2q2.8 .2 2.2 3.2h3.6v3.6q3-.6 3.2 2.2q-.2 2.8-3.2 2.2v3.6h-3.6q.6-3-2.2-3.2q-2.8 .2-2.2 3.2h-3.6v-3.6q3 .6 3.2-2.2q-.2-2.8-3.2-2.2z" fill="#1e82e6"/>
<path d="M415 408.9h7.8l3.2 3.2v10.8q0 .8-.8 .8h-10.2q-.8 0-.8-.8v-13.2q0-.8.8-.8z" fill="#fff" stroke="#3f5cc8" stroke-width="1.4"/>
<path d="M422.6 409.2v3.2h3.2" fill="#c9d4f5" stroke="#3f5cc8" stroke-width="0.8"/>
<path d="M417 414.6h6.6M417 416.4h6.6M417 418.2h6.6M417 420h4.6" stroke="#9a9a9a" stroke-width="1"/>
<path d="M533.6 411.6l1.6.6v5.8l3.2-1.6l-1.6-.8l-.8-1.8l4.2 1.6v2.4l-4.8 2.6l-1.8-1.2z" fill="#1a1a1a"/>
<rect x="557.6" y="412.4" width="8.4" height="6.4" rx="1.3" fill="none" stroke="#1a1a1a" stroke-width="1.2"/><rect x="558" y="412.6" width="7.6" height="1.4" fill="#1a1a1a"/>
<path d="M573 414.6h1.8l2.4-2.2v7.8l-2.4-2.2h-1.8z" fill="#1a1a1a"/><path d="M578.6 413.8q1.6 2.4 0 4.8" stroke="#1a1a1a" stroke-width="0.8" fill="none"/>
<rect x="589" y="413.6" width="6.2" height="6.8" rx="0.6" fill="#1a1a1a"/><rect x="590.8" y="412.6" width="2.6" height="1.2" fill="#1a1a1a"/><path d="M592.6 414.6l-1.4 2.4h1.6l-1 2" stroke="#fff" stroke-width="0.6" fill="none"/>
<rect x="405.2" y="427.4" width="29.6" height="2.6" fill="#121212"/>
</svg>
</body></html>
